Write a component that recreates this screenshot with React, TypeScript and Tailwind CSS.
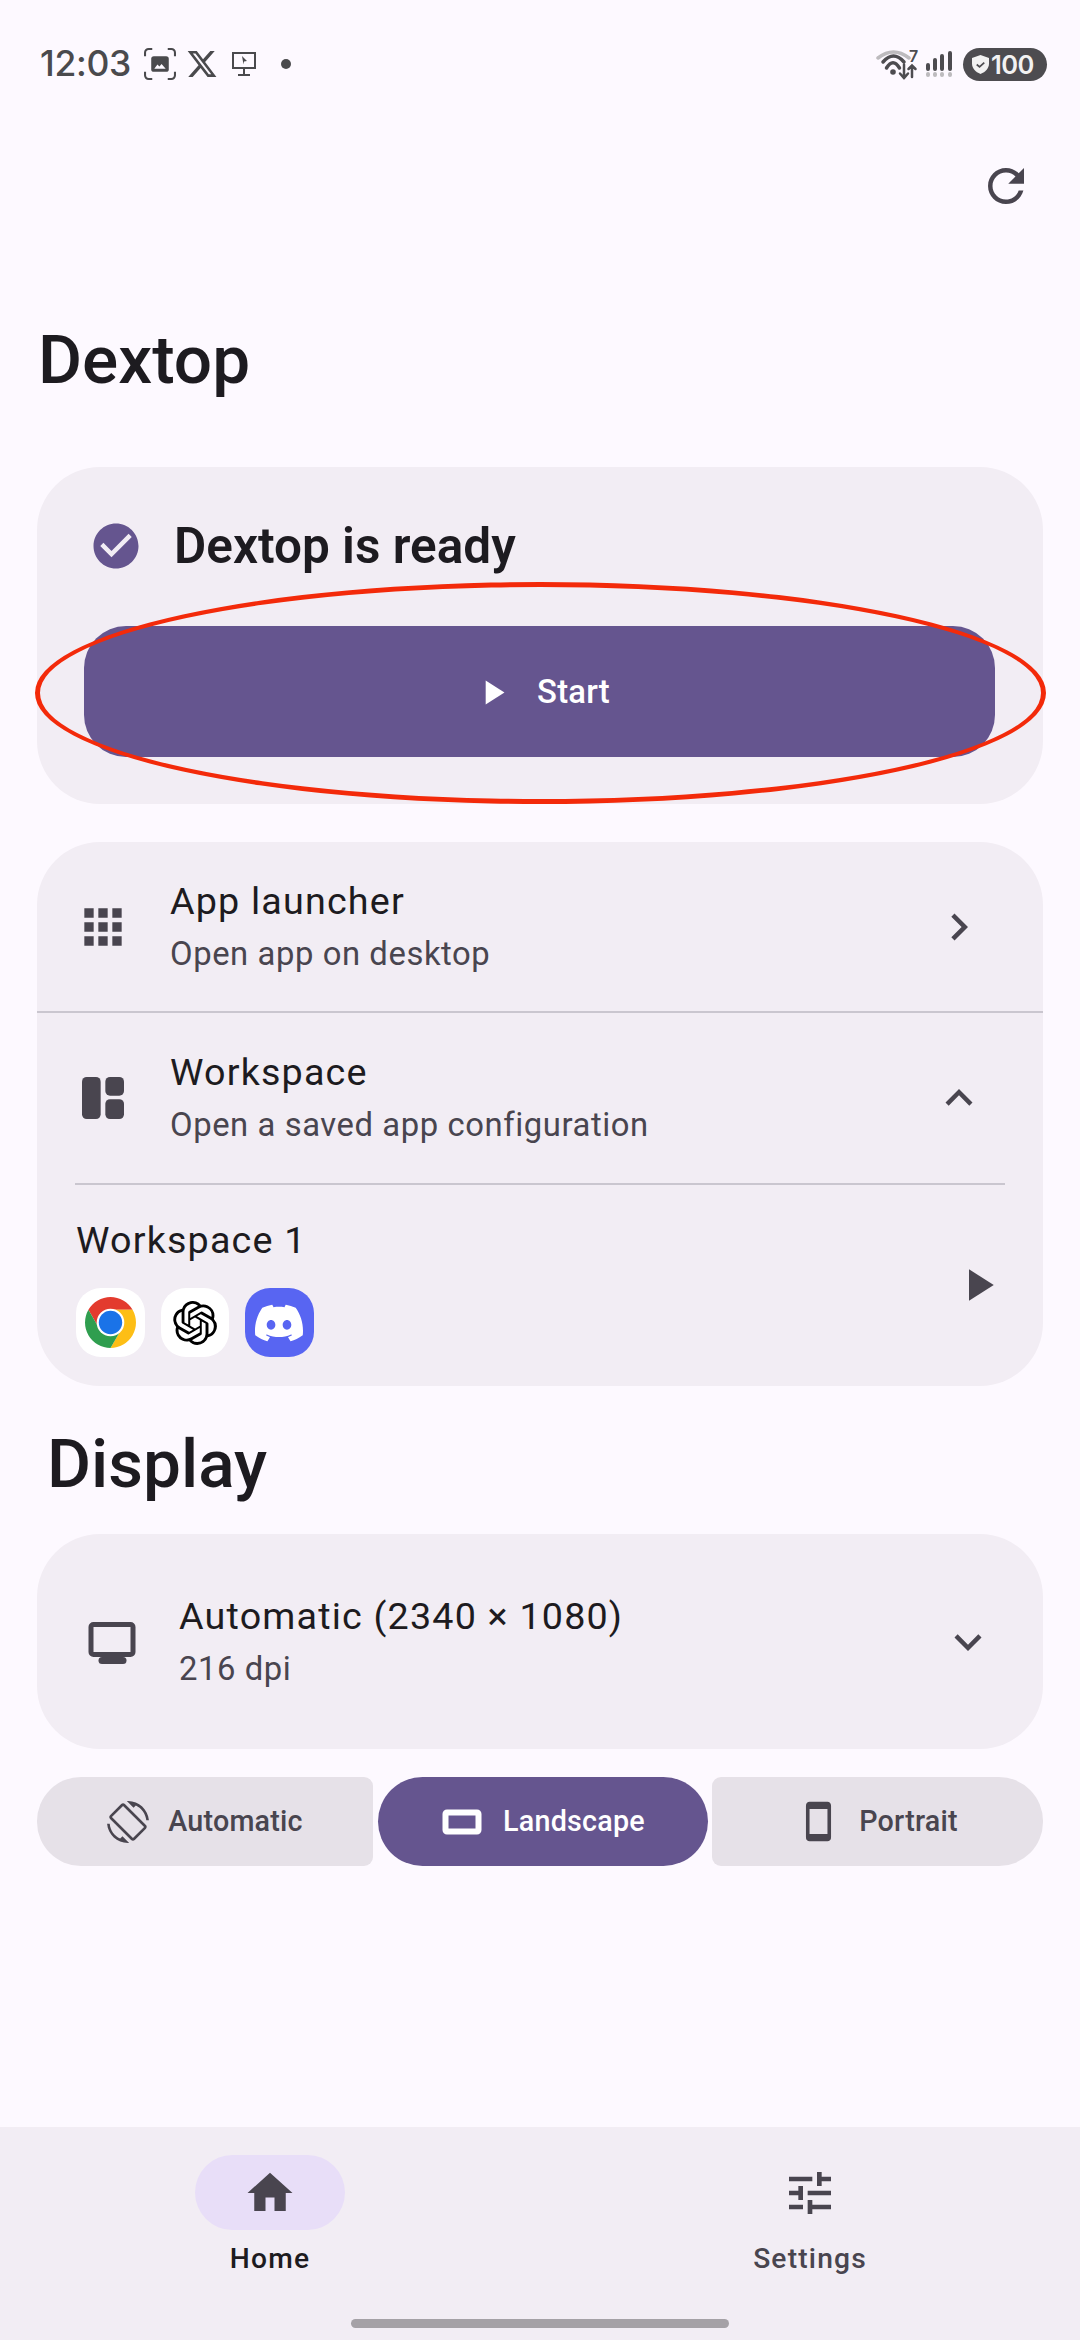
import { SiDiscord, SiOpenai } from "react-icons/si";

const P = {
  refresh: "M17.65 6.35C16.2 4.9 14.21 4 12 4c-4.42 0-7.99 3.58-7.99 8s3.57 8 7.99 8c3.73 0 6.84-2.55 7.73-6h-2.08c-.82 2.33-3.04 4-5.65 4-3.31 0-6-2.69-6-6s2.69-6 6-6c1.66 0 3.14.69 4.22 1.78L13 11h7V4l-2.35 2.35z",
  check: "M12 2C6.48 2 2 6.48 2 12s4.48 10 10 10 10-4.48 10-10S17.52 2 12 2zm-2 15l-5-5 1.41-1.41L10 14.17l7.59-7.59L19 8l-9 9z",
  play: "M8 5v14l11-7z",
  apps: "M4 8h4V4H4v4zm6 12h4v-4h-4v4zm-6 0h4v-4H4v4zm0-6h4v-4H4v4zm6 0h4v-4h-4v4zm6-10v4h4V4h-4zm-6 4h4V4h-4v4zm6 6h4v-4h-4v4zm0 6h4v-4h-4v4z",
  right: "M10 6L8.59 7.41 13.17 12l-4.58 4.59L10 18l6-6z",
  up: "M12 8l-6 6 1.41 1.41L12 10.83l4.59 4.58L18 14z",
  down: "M16.59 8.59L12 13.17 7.41 8.59 6 10l6 6 6-6z",
  rotate: "M16.48 2.52c3.27 1.55 5.61 4.72 5.97 8.48h1.5C23.44 4.84 18.29 0 12 0l-.66.03 3.81 3.81 1.33-1.32zm-6.25-.77c-.59-.59-1.54-.59-2.12 0L1.75 8.11c-.59.59-.59 1.54 0 2.12l12.02 12.02c.59.59 1.54.59 2.12 0l6.36-6.36c.59-.59.59-1.54 0-2.12L10.23 1.75zm4.6 19.44L2.81 9.17l6.36-6.36 12.02 12.02-6.36 6.36zm-7.31.29C4.25 19.94 1.91 16.76 1.55 13H.05C.56 19.16 5.71 24 12 24l.66-.03-3.81-3.81-1.33 1.32z",
  phone: "M17 1.01L7 1c-1.1 0-2 .9-2 2v18c0 1.1.9 2 2 2h10c1.1 0 2-.9 2-2V3c0-1.1-.9-1.99-2-1.99zM17 19H7V5h10v14z",
  home: "M10 20v-6h4v6h5v-8h3L12 3 2 12h3v8z",
  tune: "M3 17v2h6v-2H3zM3 5v2h10V5H3zm10 16v-2h8v-2h-8v-2h-2v6h2zM7 9v2H3v2h4v2h2V9H7zm14 4v-2H11v2h10zm-6-4h2V7h4V5h-4V3h-2v6z",
  x: "M18.244 2.25h3.308l-7.227 8.26 8.502 11.24H16.17l-5.214-6.817L4.99 21.75H1.68l7.73-8.835L1.254 2.25H8.08l4.713 6.231zm-1.161 17.52h1.833L7.084 4.126H5.117z",
};

function Icon({ d, className }: { d: string; className: string }) {
  return (
    <svg viewBox="0 0 24 24" fill="currentColor" className={className}>
      <path d={d} />
    </svg>
  );
}

function Dashboard({ className }: { className: string }) {
  return (
    <svg viewBox="0 0 24 24" fill="currentColor" className={className}>
      <rect x="3" y="3" width="8" height="18" rx="2" />
      <rect x="13" y="3" width="8" height="8" rx="2" />
      <rect x="13" y="12.500" width="8" height="8.500" rx="2" />
    </svg>
  );
}

function Monitor() {
  return (
    <svg viewBox="0 0 54 54" className="w-[54px] h-[54px] shrink-0 text-[#49454f]">
      <rect x="6" y="9.500" width="42" height="30" rx="2.500" fill="none" stroke="currentColor" strokeWidth="5" />
      <rect x="13.500" y="42" width="28" height="7" rx="3.500" fill="currentColor" />
    </svg>
  );
}

function LandscapeIcon() {
  return (
    <svg viewBox="0 0 44 44" className="w-[44px] h-[44px]">
      <rect x="5.500" y="12.500" width="33" height="19" rx="1.500" fill="none" stroke="currentColor" strokeWidth="6" />
    </svg>
  );
}

function Chrome() {
  const sector = "M3.22 12A24 24 0 0 1 44.78 12L24 12A12 12 0 0 0 13.6 30Z";
  return (
    <svg viewBox="0 0 48 48" className="w-[51px] h-[51px]">
      <path d={sector} fill="#E33B2E" />
      <path d={sector} fill="#FDBE15" transform="rotate(120 24 24)" />
      <path d={sector} fill="#2F9E4F" transform="rotate(240 24 24)" />
      <circle cx="24" cy="24" r="13" fill="#fff" />
      <circle cx="24" cy="24" r="11" fill="#1A73E8" />
    </svg>
  );
}

function StatusLeft() {
  return (
    <div className="flex items-center text-[#4a4a4d]">
      <span className="text-[35.5px] leading-[40px] font-medium font-['Inter',sans-serif] tracking-[-0.3px] w-[104px]">12:03</span>
      <svg viewBox="0 0 31 31" className="w-[32px] h-[32px]" fill="none" stroke="currentColor" strokeWidth="2">
        <path d="M1 8V4.500a3.500 3.500 0 0 1 3.500-3.500H8M23 1h3.500A3.500 3.500 0 0 1 30 4.500V8M30 23v3.500a3.500 3.500 0 0 1-3.500 3.500H23M8 30H4.500A3.500 3.500 0 0 1 1 26.500V23" />
        <rect x="7" y="8" width="17" height="15" rx="2.500" fill="currentColor" stroke="none" />
        <path d="M10 20l3-4 2 2 2-2.500 4 4.500z" fill="#fdf9ff" stroke="none" />
      </svg>
      <Icon d={P.x} className="w-[32px] h-[32px] ml-[10px]" />
      <svg viewBox="0 0 24 24" className="w-[24px] h-[24px] ml-[14px]" fill="none" stroke="currentColor" strokeWidth="2">
        <rect x="1" y="1" width="22" height="15" />
        <path d="M12 16v6M6 23h12" />
        <path d="M10 4l5 5-3 .5-.500 3z" fill="currentColor" stroke="none" />
      </svg>
      <span className="w-[10px] h-[10px] rounded-full bg-[#4a4a4d] ml-[25px]" />
    </div>
  );
}

function StatusRight() {
  return (
    <div className="flex items-center text-[#4d4c50]">
      <div className="relative w-[44px] h-[32px]">
        <svg viewBox="0 0 44 32" className="w-[44px] h-[32px]" fill="none" strokeLinecap="round">
          <path d="M3 10Q18.500 -2 34 10" stroke="#bdbbbe" strokeWidth="3.500" />
          <path d="M8 14Q18.500 2 29 14" stroke="currentColor" strokeWidth="3.500" />
          <path d="M11.500 20Q18 9.500 24.500 20" stroke="currentColor" strokeWidth="3.500" />
          <circle cx="18" cy="24" r="2.800" fill="currentColor" />
          <path d="M29 16.500V30M25 25.500l4 4.500 4-4.500M37 29V17.500M33.500 21l3.500-3.500 3.500 3.500" stroke="currentColor" strokeWidth="2.500" />
        </svg>
        <span className="absolute left-[34px] top-[1px] text-[16px] leading-[15px] font-semibold font-['Inter',sans-serif]">7</span>
      </div>
      <svg viewBox="0 0 28 32" className="w-[28px] h-[32px] ml-[6px]" fill="none" stroke="currentColor" strokeLinecap="round" strokeWidth="4">
        <path d="M3 17v4M10 12v9M17 8v13M25 5v16" />
        <path d="M3 26v1M10 26v1M17 26v1M25 26v1" stroke="#bdbbbe" />
      </svg>
      <div className="ml-[10px] w-[84px] h-[33px] rounded-full bg-[#4d4c50] flex items-center pl-[9px] text-[#f2f2f2]">
        <svg viewBox="0 0 18 20" className="w-[17px] h-[19px]">
          <path d="M9 0l9 3v6c0 5-3.500 9-9 11C3.500 18 0 14 0 9V3z" fill="currentColor" />
          <path d="M5 10l3 2.500L13 8" fill="none" stroke="#4d4c50" strokeWidth="1.800" />
        </svg>
        <span className="ml-[2px] text-[25.5px] leading-[33px] font-semibold font-['Inter',sans-serif] tracking-[-0.5px]">100</span>
      </div>
    </div>
  );
}

function Row({ icon, title, sub, chevron }: { icon: React.ReactNode; title: string; sub: string; chevron: string }) {
  return (
    <div className="h-[169px] flex items-center pl-[38px] pr-[57px]">
      <div className="w-[95px] shrink-0 text-[#49454f]">{icon}</div>
      <div className="flex-1">
        <div className="text-[37.7px] leading-[54px] tracking-[1.18px] text-[#1d1b20] relative top-[1px]">{title}</div>
        <div className="text-[32.800px] leading-[54px] tracking-[0.58px] text-[#49454f]">{sub}</div>
      </div>
      <Icon d={chevron} className="w-[54px] h-[54px] text-[#49454f]" />
    </div>
  );
}

function Seg({ icon, label, active, cls }: { icon: React.ReactNode; label: string; active?: boolean; cls: string }) {
  return (
    <div className={`h-[89px] flex items-center justify-center gap-[19px] text-[28.7px] font-medium tracking-[0.22px] ${cls} ${active ? "bg-[#65558f] text-white" : "bg-[#e6e1e8] text-[#49454f]"}`}>
      {icon}
      <span>{label}</span>
    </div>
  );
}

export default function App() {
  return (
    <div className="relative w-[1080px] h-[2340px] overflow-hidden bg-[#fdf9ff] flex flex-col font-['Roboto',sans-serif] text-[#1d1b20]">
      <div className="h-[128px] shrink-0 flex items-center justify-between pl-[40px] pr-[33px]">
        <StatusLeft />
        <StatusRight />
      </div>
      <div className="h-[115px] shrink-0 flex justify-end items-start pr-[47px] pt-[31px]">
        <Icon d={P.refresh} className="w-[54px] h-[54px] text-[#49454f]" />
      </div>
      <h1 className="h-[224px] shrink-0 pl-[38px] pt-[75px] text-[67.5px] leading-[84px] font-medium">Dextop</h1>

      <section className="mx-[37px] h-[337px] shrink-0 rounded-[63px] bg-[#f2edf4] pt-[52px] pl-[47px] pr-[48px]">
        <div className="flex items-center h-[54px] pl-[5px] gap-[31px]">
          <Icon d={P.check} className="w-[54px] h-[54px] text-[#65558f]" />
          <span className="text-[49.500px] leading-[54px] font-semibold">Dextop is ready</span>
        </div>
        <div className="mt-[53px] h-[131px] pt-[2px] pl-[3px] rounded-[42px] bg-[#65558f] text-white flex items-center justify-center gap-[24px]">
          <Icon d={P.play} className="w-[41px] h-[41px]" />
          <span className="text-[32.800px] font-medium tracking-[0.2px]">Start</span>
        </div>
      </section>

      <section className="mx-[37px] mt-[38px] h-[544px] shrink-0 rounded-[63px] bg-[#f2edf4] overflow-hidden">
        <Row icon={<Icon d={P.apps} className="w-[56px] h-[56px]" />} title="App launcher" sub="Open app on desktop" chevron={P.right} />
        <div className="h-[2px] bg-[#cac6cf]" />
        <Row icon={<Dashboard className="w-[56px] h-[56px]" />} title="Workspace" sub="Open a saved app configuration" chevron={P.up} />
        <div className="h-[2px] mx-[38px] mt-[1px] bg-[#cac6cf]" />
        <div className="flex items-center pl-[39px] pr-[38px]">
          <div className="flex-1">
            <div className="mt-[28px] text-[37.7px] leading-[54px] tracking-[1.18px]">Workspace 1</div>
            <div className="mt-[21px] flex gap-[16px]">
              <div className="w-[68.5px] h-[69px] rounded-[25px] bg-white flex items-center justify-center"><Chrome /></div>
              <div className="w-[68.5px] h-[69px] rounded-[25px] bg-white flex items-center justify-center text-black"><SiOpenai className="w-[44px] h-[44px]" /></div>
              <div className="w-[68.5px] h-[69px] rounded-[25px] bg-[#5865f2] flex items-center justify-center text-white"><SiDiscord className="w-[48px] h-[48px]" /></div>
            </div>
          </div>
          <Icon d={P.play} className="w-[54px] h-[54px] mt-[28px] text-[#49454f]" />
        </div>
      </section>

      <h2 className="h-[148px] shrink-0 pl-[47px] pt-[36px] text-[67.5px] leading-[84px] font-medium">Display</h2>

      <section className="mx-[37px] h-[215px] shrink-0 rounded-[63px] bg-[#f2edf4] flex items-center pl-[48px] pr-[48px]">
        <div className="mr-[40px]"><Monitor /></div>
        <div className="flex-1">
          <div className="text-[37.7px] leading-[54px] tracking-[1.18px]">Automatic (2340 × 1080)</div>
          <div className="text-[32.800px] leading-[52px] tracking-[0.58px] text-[#49454f]">216 dpi</div>
        </div>
        <Icon d={P.down} className="w-[54px] h-[54px] text-[#49454f]" />
      </section>

      <div className="mx-[37px] mt-[28px] shrink-0 flex gap-[4.5px]">
        <Seg icon={<Icon d={P.rotate} className="w-[42px] h-[42px]" />} label="Automatic" cls="w-[336px] rounded-l-[44px] rounded-r-[9px]" />
        <Seg icon={<LandscapeIcon />} label="Landscape" active cls="w-[330px] rounded-full" />
        <Seg icon={<Icon d={P.phone} className="w-[43px] h-[43px]" />} label="Portrait" cls="w-[331px] rounded-r-[44px] rounded-l-[9px]" />
      </div>

      <nav className="mt-auto h-[213px] shrink-0 bg-[#f2edf4] relative">
        <div className="flex pt-[28px]">
          <div className="flex-1 flex flex-col items-center">
            <div className="w-[150px] h-[75px] rounded-full bg-[#e8def8] flex items-center justify-center text-[#49454f]">
              <Icon d={P.home} className="w-[54px] h-[54px]" />
            </div>
            <span className="mt-[9px] text-[28.2px] leading-[40px] font-medium tracking-[1.18px] text-[#1d1b20]">Home</span>
          </div>
          <div className="flex-1 flex flex-col items-center">
            <div className="w-[150px] h-[75px] flex items-center justify-center text-[#49454f]">
              <Icon d={P.tune} className="w-[56px] h-[56px]" />
            </div>
            <span className="mt-[9px] text-[28.2px] leading-[40px] font-medium tracking-[1.18px] text-[#49454f]">Settings</span>
          </div>
        </div>
        <div className="absolute left-[351px] bottom-[12px] w-[378px] h-[9px] rounded-full bg-[#a5a1a6]" />
      </nav>

      <div className="absolute left-[35px] top-[582px] w-[1011px] h-[222px] rounded-[50%] border-[5px] border-[#f32a0a]" />
    </div>
  );
}
